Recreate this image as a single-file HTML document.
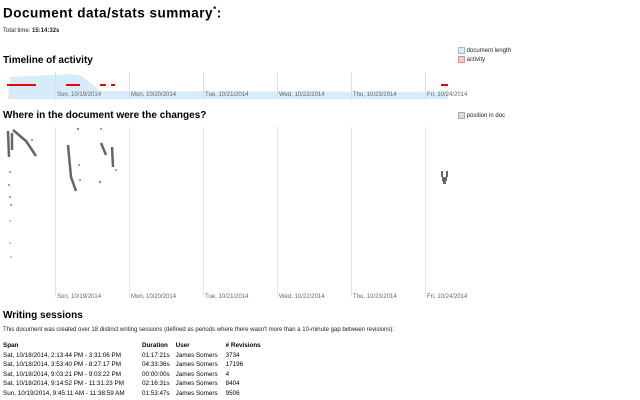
<!DOCTYPE html>
<html><head><meta charset="utf-8"><style>
body{margin:0;background:#fff;font-family:"Liberation Sans",sans-serif;color:#000;width:640px;height:400px;overflow:hidden;position:relative}
.a{position:absolute;white-space:nowrap}
h1{position:absolute;left:3px;top:5px;margin:0;font-size:13.5px;font-weight:bold;letter-spacing:.5px}
h2{position:absolute;margin:0;font-size:10px;font-weight:bold;left:3px}
.s{font-size:6px;color:#222}
.lab{font-size:6px;color:#666}
table{position:absolute;left:3px;top:341px;border-collapse:collapse;font-size:6.3px}
td,th{padding:0 6px 0 0;height:9.6px;text-align:left;line-height:9.6px}
th{font-weight:bold}
</style></head><body>
<h1>Document data/stats summary<sup style="font-size:8px">*</sup>:</h1>
<div class="a s" style="left:3px;top:28px">Total time: <b>15:14:32s</b></div>
<h2 style="top:55px">Timeline of activity</h2>
<div class="a s" style="left:458px;top:47px"><span style="display:inline-block;width:5px;height:5px;background:#d6ecfa;border:1px solid #9bc;vertical-align:middle"></span> document length</div>
<div class="a s" style="left:458px;top:56px"><span style="display:inline-block;width:5px;height:5px;background:#f7c8c8;border:1px solid #c99;vertical-align:middle"></span> activity</div>
<svg class="a" style="left:0;top:70px" width="460" height="30">
<polygon points="8,29 10,7 70,4 82,6 100,21 448,22 448,29" fill="#d6ecfa"/>
<g stroke="#ddd" stroke-width="1"><line x1="55.5" y1="2" x2="55.5" y2="30"/><line x1="129.5" y1="2" x2="129.5" y2="30"/><line x1="203.5" y1="2" x2="203.5" y2="30"/><line x1="277.5" y1="2" x2="277.5" y2="30"/><line x1="351.5" y1="2" x2="351.5" y2="30"/><line x1="425.5" y1="2" x2="425.5" y2="30"/></g>
<g fill="#e00"><rect x="7" y="14" width="29" height="2"/><rect x="66" y="14" width="14" height="2"/><rect x="100" y="14" width="6" height="2"/><rect x="111" y="14" width="4" height="2"/><rect x="441" y="14" width="7" height="2"/></g>
</svg>
<div class="a lab" style="left:57px;top:92px">Sun, 10/19/2014</div>
<div class="a lab" style="left:131px;top:92px">Mon, 10/20/2014</div>
<div class="a lab" style="left:205px;top:92px">Tue, 10/21/2014</div>
<div class="a lab" style="left:279px;top:92px">Wed, 10/22/2014</div>
<div class="a lab" style="left:353px;top:92px">Thu, 10/23/2014</div>
<div class="a lab" style="left:427px;top:92px">Fri, 10/24/2014</div>
<h2 style="top:110px">Where in the document were the changes?</h2>
<div class="a s" style="left:458px;top:112px"><span style="display:inline-block;width:5px;height:5px;background:#ddd;border:1px solid #aaa;vertical-align:middle"></span> position in doc</div>
<svg class="a" style="left:0;top:125px" width="460" height="175">
<g stroke="#e4e4e4"><line x1="55.5" y1="2" x2="55.5" y2="172"/><line x1="129.5" y1="2" x2="129.5" y2="172"/><line x1="203.5" y1="2" x2="203.5" y2="172"/><line x1="277.5" y1="2" x2="277.5" y2="172"/><line x1="351.5" y1="2" x2="351.5" y2="172"/><line x1="425.5" y1="2" x2="425.5" y2="172"/></g>
<g stroke="#666" stroke-width="2.5" fill="none"><path d="M13,5 L26,16 L36,31"/><path d="M12,8 L12,25"/><path d="M8,6 L9,32"/><path d="M68,20 L71,52 L76,66"/><path d="M101,18 L106,30"/><path d="M112,22 L113,42"/></g>
<g fill="#888"><circle cx="10" cy="47" r="1"/><circle cx="9" cy="60" r="1"/><circle cx="10" cy="72" r="1"/><circle cx="11" cy="80" r="1"/><circle cx="10" cy="96" r=".8"/><circle cx="10" cy="118" r=".8"/><circle cx="11" cy="132" r=".8"/><circle cx="78" cy="4" r="1.2"/><circle cx="79" cy="40" r="1"/><circle cx="80" cy="55" r="1"/><circle cx="101" cy="4" r="1"/><circle cx="100" cy="57" r="1.2"/><circle cx="116" cy="45" r="1"/><circle cx="32" cy="15" r="1"/></g>
<g fill="#666"><rect x="441" y="46" width="2" height="6"/><rect x="446" y="46" width="2" height="6"/><rect x="442" y="52" width="5" height="4"/><rect x="443" y="56" width="3" height="3"/></g>
</svg>
<div class="a lab" style="left:57px;top:294px">Sun, 10/19/2014</div>
<div class="a lab" style="left:131px;top:294px">Mon, 10/20/2014</div>
<div class="a lab" style="left:205px;top:294px">Tue, 10/21/2014</div>
<div class="a lab" style="left:279px;top:294px">Wed, 10/22/2014</div>
<div class="a lab" style="left:353px;top:294px">Thu, 10/23/2014</div>
<div class="a lab" style="left:427px;top:294px">Fri, 10/24/2014</div>
<h2 style="top:310px">Writing sessions</h2>
<div class="a s" style="left:3px;top:327px">This document was created over 18 distinct writing sessions (defined as periods where there wasn't more than a 10-minute gap between revisions):</div>
<table>
<tr><th style="width:133px">Span</th><th style="width:27px">Duration</th><th style="width:44px">User</th><th># Revisions</th></tr>
<tr><td>Sat, 10/18/2014, 2:13:44 PM - 3:31:06 PM</td><td>01:17:21s</td><td>James Somers</td><td>3734</td></tr>
<tr><td>Sat, 10/18/2014, 3:53:40 PM - 8:27:17 PM</td><td>04:33:36s</td><td>James Somers</td><td>17196</td></tr>
<tr><td>Sat, 10/18/2014, 9:03:21 PM - 9:03:22 PM</td><td>00:00:00s</td><td>James Somers</td><td>4</td></tr>
<tr><td>Sat, 10/18/2014, 9:14:52 PM - 11:31:23 PM</td><td>02:16:31s</td><td>James Somers</td><td>8404</td></tr>
<tr><td>Sun, 10/19/2014, 9:45:11 AM - 11:38:59 AM</td><td>01:53:47s</td><td>James Somers</td><td>9506</td></tr>
</table>
</body></html>
